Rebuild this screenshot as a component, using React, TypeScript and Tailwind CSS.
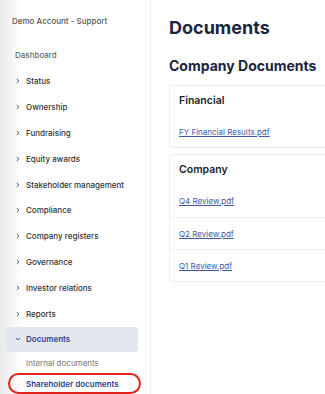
import React from "react";

const items = [
  "Status",
  "Ownership",
  "Fundraising",
  "Equity awards",
  "Stakeholder management",
  "Compliance",
  "Company registers",
  "Governance",
  "Investor relations",
  "Reports",
];

function ChevronRight() {
  return (
    <svg width="6" height="6" viewBox="0 0 10 10" fill="none" stroke="#555" strokeWidth="1.6" strokeLinecap="round" strokeLinejoin="round">
      <path d="M3.5 2 L6.5 5 L3.5 8" />
    </svg>
  );
}

function ChevronDown() {
  return (
    <svg width="6" height="6" viewBox="0 0 10 10" fill="none" stroke="#2f3f8f" strokeWidth="1.6" strokeLinecap="round" strokeLinejoin="round">
      <path d="M2 3.5 L5 6.5 L8 3.5" />
    </svg>
  );
}

export default function App() {
  return (
    <div
      className="flex w-[325px] h-[394px] overflow-hidden bg-white"
      style={{ fontFamily: "Inter, 'Noto Sans', sans-serif" }}
    >
      <aside className="w-[151px] shrink-0 border-r border-[#ededed] bg-[linear-gradient(to_right,#e9e9e9,#ffffff_22px)] flex flex-col">
        <div className="pl-[12px] pt-[15px] h-[12px] box-content text-[8px] leading-[12px] font-medium text-[#555]">
          Demo Account - Support
        </div>
        <div className="pl-[15px] mt-[22px] h-[12px] text-[8px] leading-[12px] font-medium text-[#666]">
          Dashboard
        </div>
        <div className="mt-[7px] pl-[6px] pr-[12px] flex flex-col">
          {items.map((t) => (
            <div key={t} className="h-[25.9px] flex items-center gap-[5px] pl-[9px] text-[8px] font-medium text-[#333]">
              <ChevronRight />
              <span>{t}</span>
            </div>
          ))}
          <div className="h-[25px] flex items-center gap-[5px] pl-[9px] rounded-[3px] bg-[#e3e8ef] text-[8px] font-semibold text-[#2f3f8f]">
            <ChevronDown />
            <span>Documents</span>
          </div>
          <div className="h-[21px] mt-[0.5px] flex items-center pl-[20px] text-[8px] text-[#777]">
            Internal documents
          </div>
          <div className="h-[21px] ml-[2px] -mr-[3px] flex items-center pl-[16px] rounded-full border-2 border-[#e0241c] text-[8px] font-semibold text-[#2b3d8f]">
            Shareholder documents
          </div>
        </div>
      </aside>
      <main className="w-[260px] shrink-0 pl-[18px] pt-[16px]">
        <h1 className="text-[18px] leading-[24px] font-bold text-[#1b2540]">Documents</h1>
        <h2 className="mt-[16px] text-[14px] leading-[20px] font-bold text-[#1b2540]">Company Documents</h2>
        <div className="mt-[9px] border border-[#ececec] rounded-[4px] flex flex-col">
          <div className="h-[30px] pl-[9px] pt-[9px] text-[10.5px] leading-[12px] font-semibold text-[#1b1f2a]">Financial</div>
          <div className="h-[31px] flex items-center pl-[9px] text-[8px] text-[#4257a6] underline">
            FY Financial Results.pdf
          </div>
        </div>
        <div className="mt-[6px] border border-[#ececec] rounded-[4px] flex flex-col">
          <div className="h-[30px] pl-[9px] pt-[9px] text-[10.5px] leading-[12px] font-semibold text-[#1b1f2a]">Company</div>
          {["Q4 Review.pdf", "Q2 Review.pdf", "Q1 Review.pdf"].map((f, i) => (
            <div
              key={f}
              className={`h-[32px] flex items-center pl-[9px] text-[8px] text-[#4257a6] underline ${i > 0 ? "border-t border-[#f0f0f0]" : ""}`}
            >
              {f}
            </div>
          ))}
        </div>
      </main>
    </div>
  );
}
